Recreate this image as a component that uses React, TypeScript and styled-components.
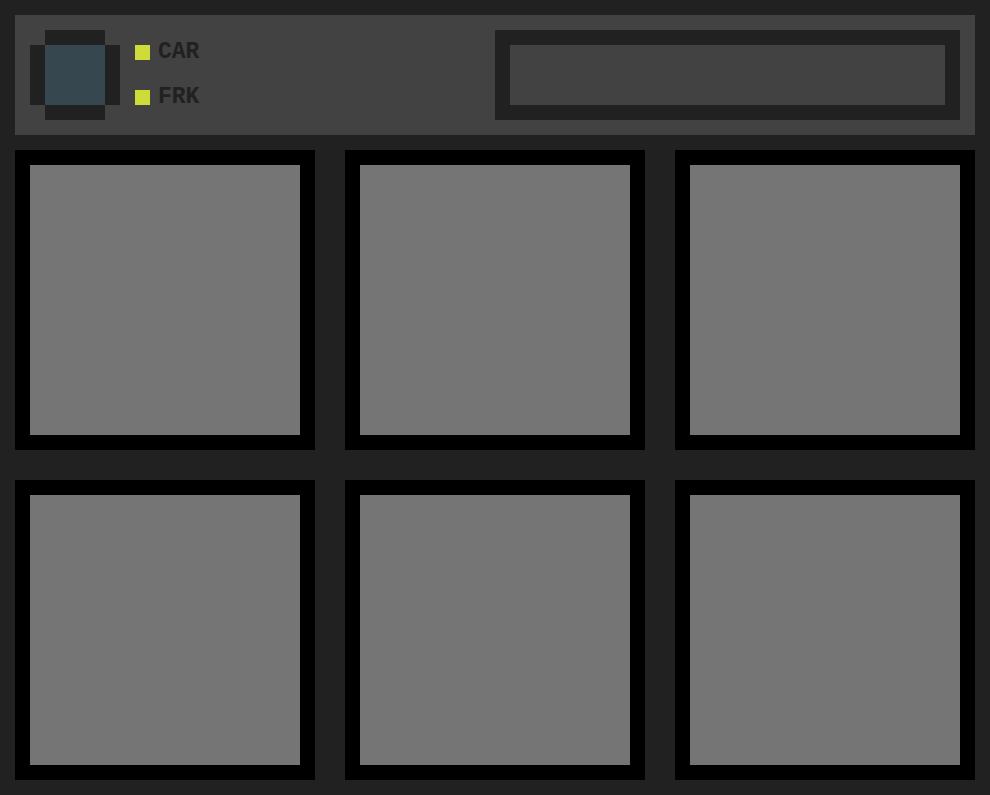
import React from "react";
import styled, { createGlobalStyle } from "styled-components";

const GlobalStyle = createGlobalStyle`
  * { box-sizing: border-box; }
  body { margin: 0; background: #212121; }
`;

const Page = styled.main`
  display: flex;
  flex-direction: column;
  gap: 15px;
  min-height: 100vh;
  padding: 15px;
  background: #212121;
  font-family: "Liberation Mono", monospace;
`;

const Toolbar = styled.header`
  display: grid;
  grid-template-columns: 1fr 1fr;
  padding: 15px;
  background: #424242;
`;

const Status = styled.div`
  display: flex;
  gap: 15px;
`;

const Avatar = styled.svg`
  display: block;
  width: 90px;
  height: 90px;
`;

const Indicators = styled.ul`
  display: flex;
  flex-direction: column;
  justify-content: space-between;
  margin: 0;
  padding: 15px 0;
  list-style: none;
`;

const Indicator = styled.li`
  display: flex;
  align-items: center;
  gap: 8px;
  height: 15px;
  color: #212121;
  font-size: 23px;
  font-weight: 700;
  line-height: 15px;
`;

const Light = styled.span`
  width: 15px;
  height: 15px;
  background: #cddc39;
`;

const Display = styled.input`
  width: 100%;
  height: 90px;
  padding: 0 15px;
  border: 15px solid #212121;
  border-radius: 0;
  outline: 0;
  background: #424242;
  color: #cddc39;
  font: inherit;
  font-size: 23px;
`;

const Tiles = styled.section`
  display: grid;
  grid-template-columns: repeat(3, 1fr);
  gap: 30px;
`;

const Tile = styled.div`
  aspect-ratio: 1;
  border: 15px solid #000;
  background: #757575;
`;

const labels = ["CAR", "FRK"];
const tiles = [1, 2, 3, 4, 5, 6];

export default function App() {
  return (
    <>
      <GlobalStyle />
      <Page>
        <Toolbar>
          <Status>
            <Avatar viewBox="0 0 6 6" shapeRendering="crispEdges" aria-hidden="true">
              <path fill="#212121" d="M1 0h4v1h1v4H5v1H1V5H0V1h1z" />
              <path fill="#37474f" d="M1 1h4v4H1z" />
            </Avatar>
            <Indicators>
              {labels.map((label) => (
                <Indicator key={label}>
                  <Light />
                  {label}
                </Indicator>
              ))}
            </Indicators>
          </Status>
          <Display type="text" aria-label="Display" />
        </Toolbar>
        <Tiles>
          {tiles.map((id) => (
            <Tile key={id} />
          ))}
        </Tiles>
      </Page>
    </>
  );
}
